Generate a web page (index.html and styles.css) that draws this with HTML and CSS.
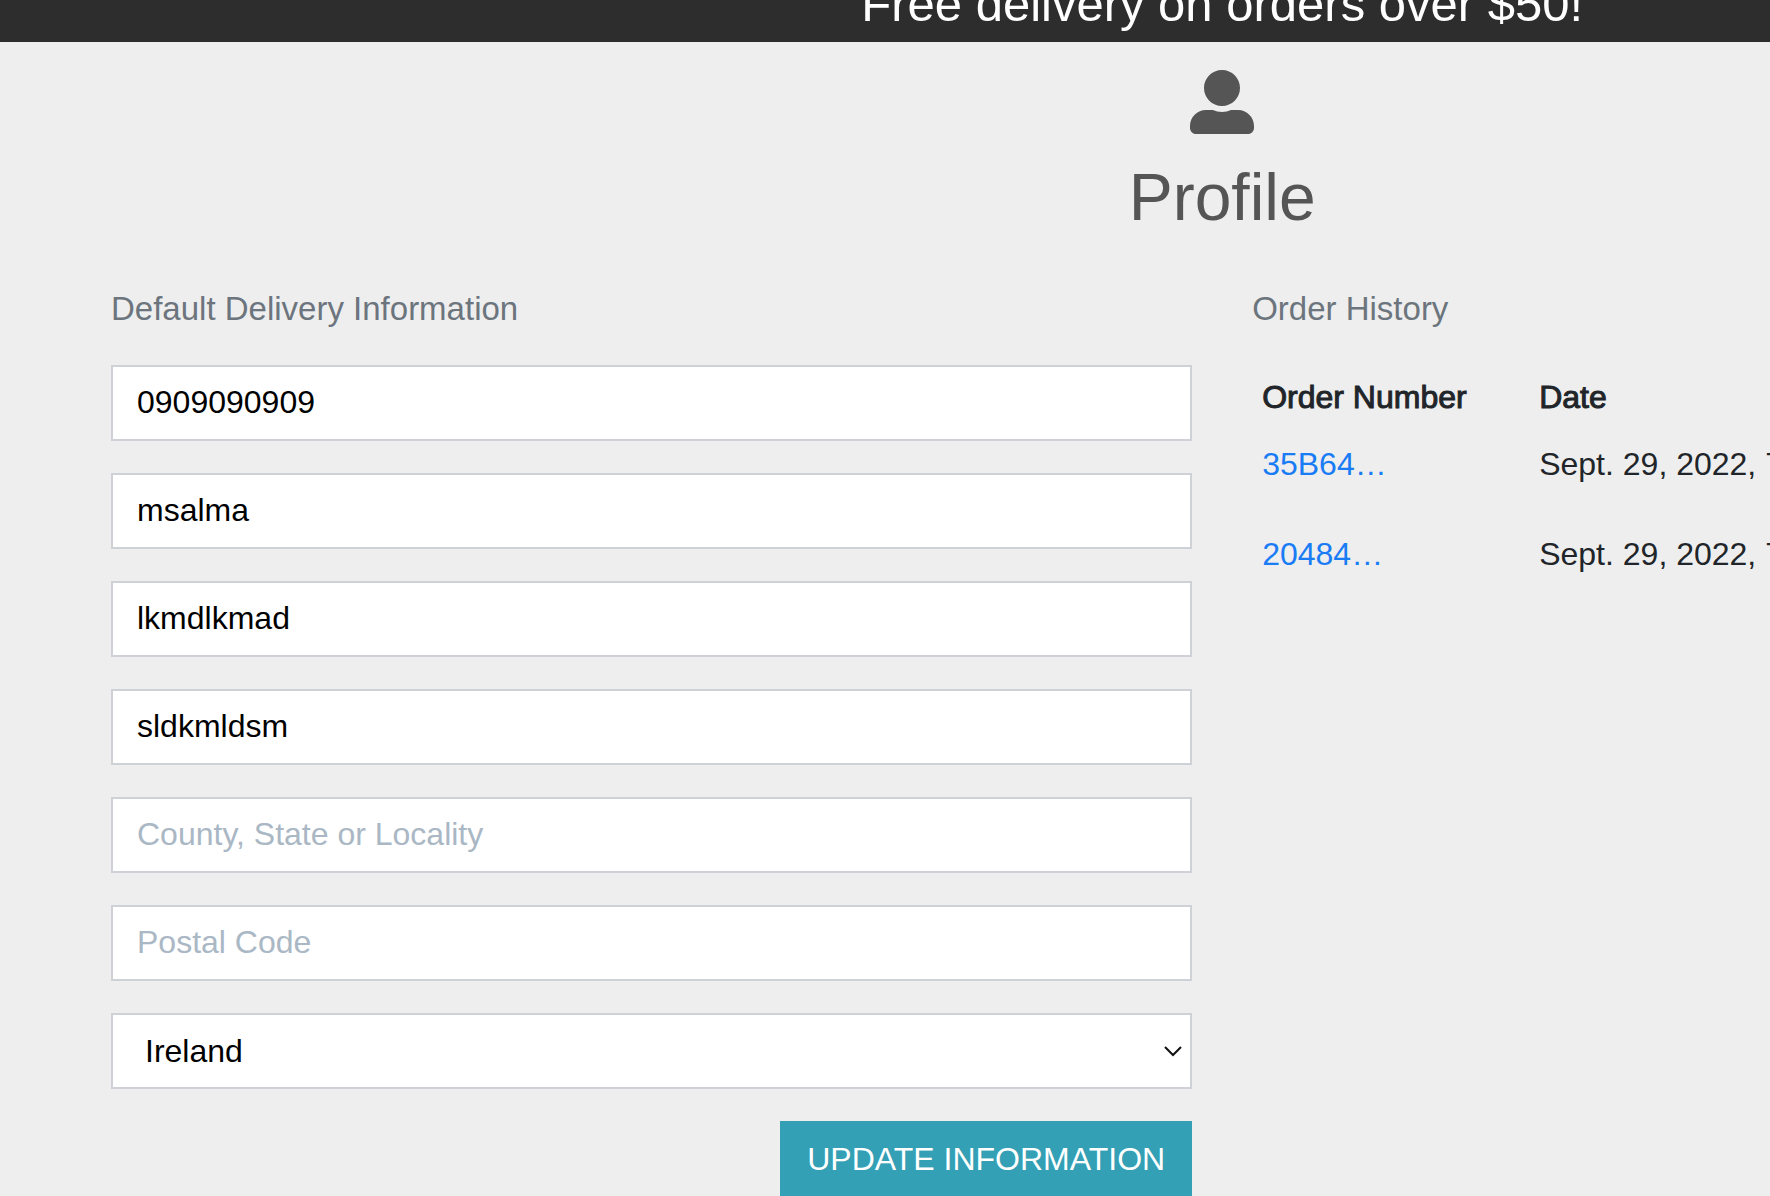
FILE: index.html
```html
<!DOCTYPE html>
<html lang="en">
<head>
  <meta charset="utf-8">
  <title>Profile</title>
  <link rel="stylesheet" href="styles.css">
</head>
<body>
  <div class="page">
    <div class="banner"><p class="banner-text">Free delivery on orders over $50!</p></div>
    <header class="profile-header">
      <svg class="profile-icon" viewBox="0 0 512 512" aria-hidden="true"><path fill="currentColor" d="M256 0c79.500 0 144 64.500 144 144s-64.500 144-144 144S112 223.500 112 144 176.500 0 256 0zm128 320h-55.100c-22.200 10.200-46.900 16-72.900 16s-50.600-5.800-72.900-16H128C57.300 320 0 377.300 0 448v16c0 26.500 21.500 48 48 48h416c26.500 0 48-21.500 48-48v-16c0-70.700-57.300-128-128-128z"/></svg>
      <h1 class="profile-title">Profile</h1>
    </header>
    <main class="columns">
      <section>
        <h2 class="section-title">Default Delivery Information</h2>
        <form class="delivery-form">
          <input class="field" type="text" aria-label="Phone Number" value="0909090909">
          <input class="field" type="text" aria-label="Street Address 1" value="msalma">
          <input class="field" type="text" aria-label="Street Address 2" value="lkmdlkmad">
          <input class="field" type="text" aria-label="Town or City" value="sldkmldsm">
          <input class="field" type="text" aria-label="County, State or Locality" placeholder="County, State or Locality">
          <input class="field" type="text" aria-label="Postal Code" placeholder="Postal Code">
          <div class="select-wrap">
            <select class="field field-select" aria-label="Country"><option>Ireland</option></select>
            <svg class="chevron" viewBox="0 0 18 11" aria-hidden="true"><path d="M1 1l8 8 8-8" fill="none" stroke="#111" stroke-width="2"/></svg>
          </div>
          <button class="update-button" type="submit">UPDATE INFORMATION</button>
        </form>
      </section>
      <section>
        <h2 class="section-title">Order History</h2>
        <table class="orders">
          <thead>
            <tr><th class="order-number" scope="col">Order Number</th><th scope="col">Date</th></tr>
          </thead>
          <tbody>
            <tr><td><a class="order-link" href="#">35B64…</a></td><td>Sept. 29, 2022, 7</td></tr>
            <tr><td><a class="order-link" href="#">20484…</a></td><td>Sept. 29, 2022, 7</td></tr>
          </tbody>
        </table>
      </section>
    </main>
  </div>
</body>
</html>
```
FILE: styles.css
```css
* {
  box-sizing: border-box;
}

body {
  margin: 0;
  background: #eee;
  color: #212529;
  font-family: "Liberation Sans", Arial, sans-serif;
  font-size: 32px;
  line-height: 48px;
  overflow: hidden;
}

/* The page is wider than the window and is cut off at its right edge. */
.page {
  width: 138.1%;
}

.banner {
  display: flex;
  justify-content: center;
  align-items: flex-end;
  height: 42px;
  background: #2d2d2d;
  color: #fff;
}

.banner-text {
  margin: 0;
  padding-bottom: 9px;
  font-size: 49px;
  line-height: 58px;
}

.profile-header {
  display: flex;
  flex-direction: column;
  align-items: center;
  gap: 24px;
  padding-top: 28px;
  color: #555;
}

.profile-icon {
  display: block;
  width: 64px;
  height: 64px;
}

.profile-title {
  margin: 0;
  font-size: 66px;
  font-weight: 400;
  line-height: 78px;
}

.columns {
  display: grid;
  grid-template-columns: 1fr 1fr;
  gap: 60px;
  padding: 49px 111px 0;
}

.section-title {
  margin: 0 0 32px;
  color: #6c757d;
  font-size: 33px;
  font-weight: 400;
  line-height: 48px;
}

.delivery-form {
  display: flex;
  flex-direction: column;
  gap: 32px;
}

.field {
  display: block;
  width: 100%;
  height: 76px;
  padding: 11px 24px 13px;
  border: 2px solid #ced1d6;
  border-radius: 0;
  background: #fff;
  color: #000;
  font: inherit;
}

.field::placeholder {
  color: #aab7c4;
  opacity: 1;
}

.select-wrap {
  position: relative;
}

.field-select {
  padding: 12px 32px;
  appearance: none;
}

.chevron {
  position: absolute;
  top: 33px;
  right: 10px;
  width: 18px;
  height: 11px;
  pointer-events: none;
}

.update-button {
  align-self: flex-end;
  height: 76px;
  padding: 0 27px;
  border: 0;
  background: #33a0b5;
  color: #fff;
  font: inherit;
}

.orders {
  width: 100%;
  table-layout: fixed;
  border-collapse: collapse;
}

.orders th,
.orders td {
  padding: 8px 10px 11px;
  text-align: left;
  vertical-align: top;
  white-space: nowrap;
}

.orders th {
  font-weight: 400;
  -webkit-text-stroke: 1px currentColor;
}

.orders td {
  height: 90px;
}

.order-number {
  width: 277px;
}

.order-link {
  color: #1a7cf5;
  text-decoration: none;
}
```
